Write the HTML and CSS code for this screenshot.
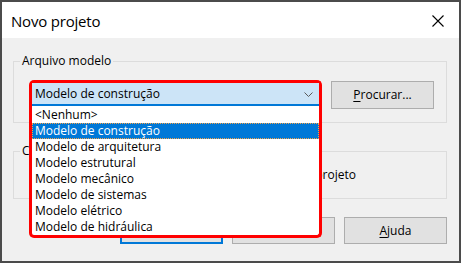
FILE: index.html
```html
<!DOCTYPE html>
<html lang="pt">
<head>
<meta charset="utf-8">
<title>Novo projeto</title>
<link rel="stylesheet" href="styles.css">
</head>
<body>
<div class="window">
  <div class="titlebar">
    <span class="title">Novo projeto</span>
    <svg class="close" width="12" height="12" viewBox="0 0 12 12"><path d="M0.5 0.5 L11.5 11.5 M11.5 0.5 L0.5 11.5" stroke="#000" stroke-width="1.1" fill="none"/></svg>
  </div>
  <div class="content">
    <fieldset class="group g1">
      <legend>Arquivo modelo</legend>
      <div class="row">
        <div class="combo-wrap">
          <div class="combo">
            <span>Modelo de construção</span>
            <svg class="chev" width="9" height="5" viewBox="0 0 9 5"><path d="M0.5 0.5 L4.5 4.5 L8.5 0.5" stroke="#5a5a5a" stroke-width="1" fill="none"/></svg>
          </div>
          <ul class="dropdown">
            <li>&lt;Nenhum&gt;</li>
            <li class="sel">Modelo de construção</li>
            <li>Modelo de arquitetura</li>
            <li>Modelo estrutural</li>
            <li>Modelo mecânico</li>
            <li>Modelo de sistemas</li>
            <li>Modelo elétrico</li>
            <li>Modelo de hidráulica</li>
          </ul>
        </div>
        <button class="btn browse"><u>P</u>rocurar...</button>
      </div>
    </fieldset>
    <fieldset class="group g2">
      <legend>Criar novo</legend>
      <div class="radios">
        <label class="radio"><span class="dot"></span>Projeto</label>
        <label class="radio"><span class="dot on"></span>Modelo de projeto</label>
      </div>
    </fieldset>
    <div class="actions">
      <button class="btn default">OK</button>
      <button class="btn">Cancelar</button>
      <button class="btn"><u>A</u>juda</button>
    </div>
  </div>
</div>
</body>
</html>
```
FILE: styles.css
```css
* { box-sizing: border-box; }
html, body { margin: 0; padding: 0; }
body {
  font-family: "Open Sans", "Noto Sans", sans-serif;
  font-size: 12px;
  color: #000;
  background: #4b4b4b;
}
.window {
  width: 461px;
  height: 263px;
  border: 2px solid #4b4b4b;
  background: #f0f0f0;
  display: flex;
  flex-direction: column;
}
.titlebar {
  height: 36px;
  background: #fff;
  display: flex;
  align-items: center;
  justify-content: space-between;
  padding: 0 15px 0 9px;
}
.title {
  font-size: 15px;
  line-height: 20px;
  margin-top: 1px;
  letter-spacing: -0.2px;
}
.close { display: block; margin-top: 1px; }
.content {
  padding: 15px 12px 0 11px;
}
.group {
  margin: 0;
  min-width: 0;
  border: 1px solid #dcdcdc;
}
.group legend {
  padding: 0 2px;
  margin-left: -9px;
  line-height: 16px;
  height: 16px;
}
.g1 { padding: 11px 12px 13px 15px; }
.g2 { padding: 8px 12px 15px 15px; margin-top: 20px; }
.row {
  display: flex;
  align-items: flex-start;
  gap: 9px;
}
.combo-wrap {
  position: relative;
  width: 293px;
  border: 3px solid #ff0000;
  border-bottom: none;
  border-radius: 5px 5px 0 0;
}
.combo {
  height: 23px;
  background: #cce4f7;
  border-bottom: 2px solid #0078d7;
  display: flex;
  align-items: center;
  justify-content: space-between;
  padding: 0 6px 0 3px;
  line-height: 21px;
}
.chev { display: block; margin-top: 1px; }
.dropdown {
  position: absolute;
  z-index: 10;
  top: 23px;
  left: -3px;
  width: 293px;
  margin: 0;
  padding: 1px 0 0 0;
  list-style: none;
  background: #fff;
  border: 3px solid #ff0000;
  border-top: none;
  border-radius: 0 0 5px 5px;
}
.dropdown li {
  height: 16px;
  line-height: 16px;
  padding-left: 3px;
  white-space: nowrap;
}
.dropdown li.sel {
  background: #0078d7;
  color: #fff;
  outline: 1px dotted #f3a34a;
  outline-offset: -1px;
}
.btn {
  width: 103px;
  height: 27px;
  background: #e1e1e1;
  border: 1px solid #adadad;
  font: inherit;
  color: #000;
  padding: 0;
  line-height: 16px;
}
.btn u { text-underline-offset: 2px; }
.browse { height: 28px; margin-top: 1px; }
.btn.default { border: 2px solid #0078d7; }
.radios {
  display: flex;
  line-height: 16px;
}
.radio {
  display: flex;
  align-items: center;
  gap: 5px;
}
.radio + .radio { margin-left: 147px; }
.dot {
  width: 13px;
  height: 13px;
  border: 1px solid #333;
  border-radius: 50%;
  background: #fff;
  display: inline-block;
}
.dot.on { box-shadow: inset 0 0 0 3px #fff, inset 0 0 0 7px #333; }
.actions {
  display: flex;
  justify-content: flex-end;
  gap: 9px;
  margin-top: 18px;
}
```
